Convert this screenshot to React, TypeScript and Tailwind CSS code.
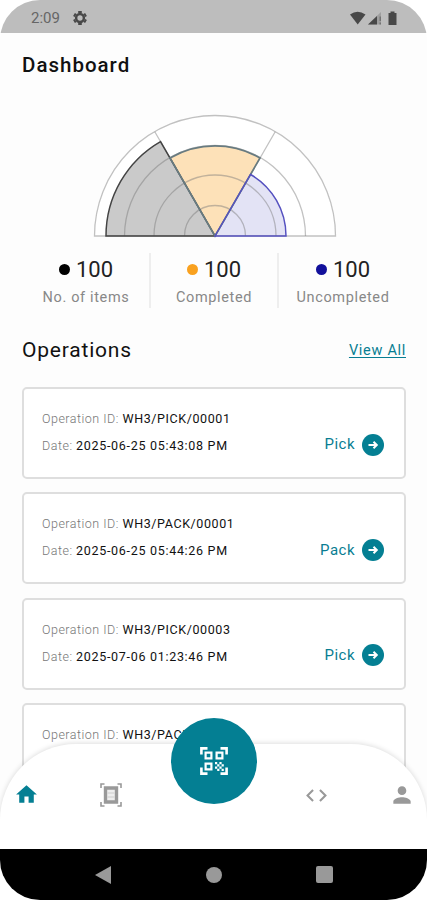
import { MdCode, MdHome, MdPerson } from "react-icons/md";

const stats = [
  { label: "No. of items", value: 100, dot: "bg-black" },
  { label: "Completed", value: 100, dot: "bg-[#f9a11f]" },
  { label: "Uncompleted", value: 100, dot: "bg-[#12109b]" },
];

const operations = [
  { id: "WH3/PICK/00001", date: "2025-06-25 05:43:08 PM", action: "Pick" },
  { id: "WH3/PACK/00001", date: "2025-06-25 05:44:26 PM", action: "Pack" },
  { id: "WH3/PICK/00003", date: "2025-07-06 01:23:46 PM", action: "Pick" },
  { id: "WH3/PACK/00003", date: "2025-07-06 01:24:10 PM", action: "Pack" },
];

function StatusBar() {
  return (
    <header className="flex h-[33px] shrink-0 items-center justify-between bg-[#bdbdbd] pt-0.5 pr-[28px] pl-[31px] text-[#484848]">
      <div className="flex items-center gap-3">
        <span className="text-[15px] leading-5 text-[#666]">2:09</span>
        <svg className="size-4" viewBox="0 0 16 16" fill="none" stroke="currentColor">
          <circle cx="8" cy="8" r="3.9" strokeWidth="2.5" />
          <path d="M8 1V3M8 13V15M2 4.5L3.7 5.5M12.3 10.5L14 11.5M2 11.5L3.7 10.5M12.3 5.5L14 4.5" strokeWidth="3.6" />
        </svg>
      </div>
      <svg className="h-4 w-[49px]" viewBox="0 0 49 16" fill="currentColor">
        <path d="M0 4.5Q7.5 -1 15.5 4.5L7.7 14.5Z" />
        <path d="M18 14.5L31 2V14.5Z" fillOpacity="0.25" />
        <path d="M18 14.5L27 6V14.5Z" />
        <path d="M29.5 6.5H31V11H29.5ZM29.5 12.5H31V14.5H29.5Z" fillOpacity="0.5" />
        <path d="M38.5 3H40.5V1.5H44.5V3H46.5V15H38.5Z" />
      </svg>
    </header>
  );
}

function PolarChart() {
  return (
    <svg className="h-[124px] w-[246px]" viewBox="-123 -122 246 124" fill="none">
      <path d="M0 0H-120.5A120.5 120.5 0 0 1 120.5 0Z" fill="#fff" />
      <path d="M0 0H-109A109 109 0 0 1 -54.5 -94.4Z" fill="#cacaca" />
      <path d="M0 0L-45 -78A90 90 0 0 1 45 -78Z" fill="#fde1b8" />
      <path d="M0 0L35.5 -61.5A71 71 0 0 1 71 0Z" fill="#e3e3f5" />
      <g stroke="#777" strokeOpacity="0.45" strokeWidth="1.3">
        <path d="M-30.5 0A30.5 30.5 0 0 1 30.5 0" />
        <path d="M-61 0A61 61 0 0 1 61 0" />
        <path d="M-90.5 0A90.5 90.5 0 0 1 90.5 0" />
        <path d="M-120.5 0A120.5 120.5 0 0 1 120.5 0Z" />
        <path d="M0 0L-60.2 -104.3M0 0L60.2 -104.3" />
      </g>
      <path d="M0 0H-109A109 109 0 0 1 -54.5 -94.4Z" stroke="#444" strokeWidth="1.5" />
      <path d="M0 0L-45 -78A90 90 0 0 1 45 -78Z" stroke="#687b80" strokeWidth="1.7" />
      <path d="M0 0L35.5 -61.5A71 71 0 0 1 71 0Z" stroke="#5551c0" strokeWidth="1.5" />
    </svg>
  );
}

function OperationCard({ id, date, action }: { id: string; date: string; action: string }) {
  return (
    <li className="flex h-[92px] shrink-0 items-end justify-between rounded-[5px] border-2 border-[#dedede] bg-white pr-5 pb-[18px] pl-[18px]">
      <div className="text-[12.5px] leading-[27px] font-light tracking-[0.5px] text-[#777]">
        <p>Operation ID: <span className="font-normal tracking-[0.6px] text-[#111]">{id}</span></p>
        <p>Date: <span className="font-normal tracking-[0.7px] text-[#111]">{date}</span></p>
      </div>
      <div className="mb-px flex h-[27px] items-center gap-[7px] text-[15px] tracking-[0.5px] text-[#087d92]">
        {action}
        <span className="flex size-[22px] items-center justify-center rounded-full bg-[#047f93]">
          <svg className="size-3" viewBox="0 0 12 12" fill="none" stroke="#fff" strokeWidth="2">
            <path d="M1.5 6H9M6.5 2.7L9.8 6L6.5 9.3" />
          </svg>
        </span>
      </div>
    </li>
  );
}

function BoxScanIcon() {
  return (
    <svg className="size-6" viewBox="0 0 24 24" fill="none" stroke="#999">
      <path d="M2 5V1H5.5M18.5 1H22V5M22 19V23H18.5M5.5 23H2V19" strokeWidth="1.6" />
      <path d="M6.5 5H17.5V19H6.5Z" strokeWidth="3.4" fill="#eee" />
      <path d="M8.5 10H15.5M8.5 14H15.5" stroke="#ccc" />
    </svg>
  );
}

function QrScanIcon() {
  return (
    <svg className="size-7" viewBox="0 0 28 28" fill="none" stroke="#fff" strokeWidth="2.2">
      <path d="M1.4 7.5V1.4H7.5M20.5 1.4H26.6V7.5M26.6 20.5V26.6H20.5M7.5 26.6H1.4V20.5" strokeWidth="2.6" />
      <path d="M5.6 5.6H11.4V11.4H5.6ZM16.6 5.6H22.4V11.4H16.6ZM5.6 16.6H11.4V22.4H5.6Z" />
      <path d="M15 16.2H17.2M19.4 16.2H21.6M17.2 18.4H19.4M21.6 18.4H23.8M15 20.6H17.2M19.4 20.6H21.6M17.2 22.8H19.4M21.6 22.8H23.8" />
    </svg>
  );
}

function BottomNav() {
  return (
    <nav className="absolute inset-x-0 bottom-[51px] flex h-[105px] items-start justify-between rounded-t-[76px] bg-white pt-[38px] pr-[12px] pl-[14px] text-[#999] shadow-[0_-1px_5px_rgba(0,0,0,0.13)]">
      <div className="flex w-[109px] items-center justify-between">
        <MdHome className="size-[25px] text-[#047f93]" />
        <BoxScanIcon />
      </div>
      <div className="-mt-[64px] flex size-[86px] items-center justify-center rounded-full bg-[#047f93]">
        <QrScanIcon />
      </div>
      <div className="flex w-[111px] items-center justify-between">
        <MdCode className="size-[25px]" />
        <MdPerson className="size-[26px]" />
      </div>
    </nav>
  );
}

function SystemBar() {
  return (
    <footer className="absolute inset-x-0 bottom-0 flex h-[51px] items-center justify-between bg-black pr-[94px] pl-[95px]">
      <svg className="h-[18px] w-4" viewBox="0 0 16 18" fill="#999"><path d="M0 9L16 0V18Z" /></svg>
      <span className="size-4 rounded-full bg-[#999]" />
      <span className="size-[17px] rounded-[2px] bg-[#999]" />
    </footer>
  );
}

export default function App() {
  return (
    <div className="h-[900px] w-[427px] bg-white font-[Roboto,sans-serif]">
      <div className="relative flex h-full flex-col overflow-hidden rounded-[40px] bg-[#fdfdfd]">
        <StatusBar />
        <main className="flex min-h-0 flex-1 flex-col pr-[21px] pl-[22px]">
          <h1 className="mt-[18px] text-[20.5px] leading-7 font-medium tracking-[1px] text-[#111]">Dashboard</h1>
          <div className="mt-[35px] flex justify-center pl-0.5">
            <PolarChart />
          </div>
          <section className="mt-[15px] -mr-px ml-px grid h-[55px] grid-cols-3 divide-x-2 divide-[#eee]">
            {stats.map((s) => (
              <div key={s.label} className="flex flex-col items-center">
                <div className="mt-[3px] flex h-[26px] items-center gap-1.5 text-[22px] text-[#222]">
                  <span className={`size-[11px] rounded-full ${s.dot}`} />
                  {s.value}
                </div>
                <p className="mt-1.5 text-[14.5px] leading-5 tracking-[0.65px] whitespace-nowrap text-[#888]">{s.label}</p>
              </div>
            ))}
          </section>
          <div className="mt-[28px] flex items-center justify-between">
            <h2 className="text-[21px] leading-7 tracking-[0.8px] text-[#111]">Operations</h2>
            <a className="pt-px text-[14.5px] tracking-[0.7px] text-[#087d92] underline decoration-1 underline-offset-2">View All</a>
          </div>
          <ul className="mt-[23px] flex flex-col gap-[13.4px]">
            {operations.map((op) => <OperationCard key={op.id} {...op} />)}
          </ul>
        </main>
        <BottomNav />
        <SystemBar />
      </div>
    </div>
  );
}
